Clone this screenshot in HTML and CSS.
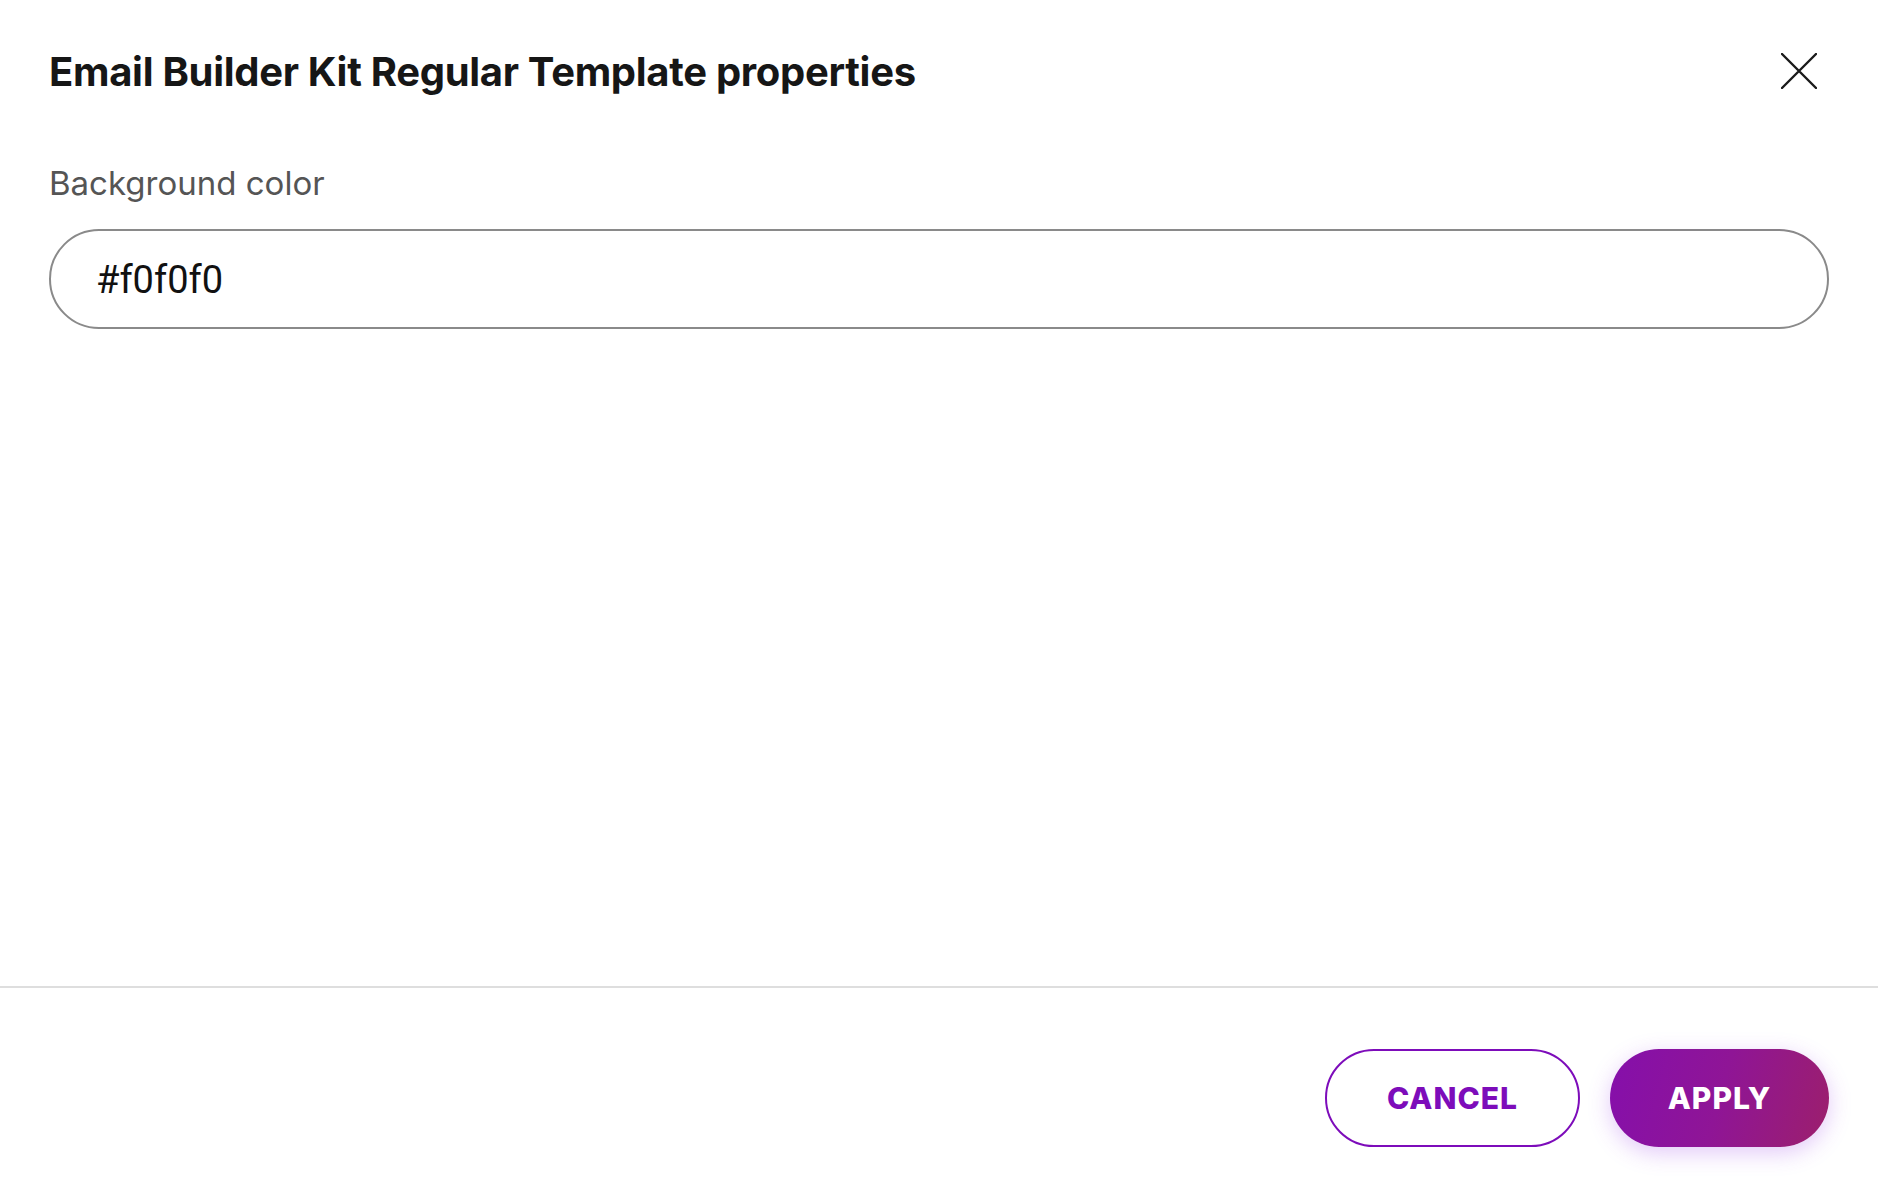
FILE: index.html
```html
<!DOCTYPE html>
<html lang="en">
<head>
<meta charset="utf-8">
<title>Template properties</title>
<link rel="stylesheet" href="styles.css">
</head>
<body>
<div class="dialog">
  <header class="dialog-header">
    <h1 class="dialog-title">Email Builder Kit Regular Template properties</h1>
    <button class="close-btn" aria-label="Close">
      <svg viewBox="0 0 36 36" width="36" height="36"><path d="M1 1 L35 35 M35 1 L1 35" stroke="#1a1a1a" stroke-width="2.4" stroke-linecap="round" fill="none"/></svg>
    </button>
  </header>
  <main class="dialog-body">
    <label class="field-label" for="bg">Background color</label>
    <input class="field-input" id="bg" type="text" value="#f0f0f0">
  </main>
  <footer class="dialog-footer">
    <button class="btn btn-outline">CANCEL</button>
    <button class="btn btn-primary">APPLY</button>
  </footer>
</div>
</body>
</html>
```
FILE: styles.css
```css
html, body {
  margin: 0;
  padding: 0;
  height: 100%;
  background: #ffffff;
}
body {
  font-family: Inter, "Noto Sans", sans-serif;
  color: #1a1a1a;
}
.dialog {
  display: flex;
  flex-direction: column;
  height: 100vh;
  box-sizing: border-box;
}
.dialog-header {
  display: flex;
  align-items: center;
  justify-content: space-between;
  padding: 48px 49px 0 49px;
  height: 46px;
}
.dialog-title {
  margin: 0;
  font-size: 40px;
  font-weight: 700;
  letter-spacing: -0.3px;
  color: #161616;
  white-space: nowrap;
}
.close-btn {
  border: 0;
  background: none;
  padding: 0;
  width: 36px;
  height: 36px;
  display: flex;
  margin-right: 12px;
  cursor: pointer;
}
.dialog-body {
  flex: 1;
  display: flex;
  flex-direction: column;
  padding: 69px 49px 0 49px;
}
.field-label {
  font-size: 33px;
  color: #555555;
  font-weight: 400;
  margin-bottom: 26px;
}
.field-input {
  box-sizing: border-box;
  height: 100px;
  width: 100%;
  border: 2px solid #8a8a8a;
  border-radius: 50px;
  padding: 2px 45px 0 45px;
  font-family: Roboto, sans-serif;
  font-size: 38px;
  color: #111111;
  outline: none;
}
.dialog-footer {
  border-top: 2px solid #dedede;
  display: flex;
  justify-content: flex-end;
  gap: 30px;
  padding: 61px 49px 50px 49px;
}
.btn {
  box-sizing: border-box;
  height: 98px;
  border-radius: 49px;
  font-family: Inter, sans-serif;
  font-size: 30px;
  font-weight: 800;
  letter-spacing: 1px;
  cursor: pointer;
}
.btn-outline {
  width: 255px;
  background: #ffffff;
  border: 2px solid #7d0cba;
  color: #7d0cba;
}
.btn-primary {
  width: 219px;
  border: 0;
  color: #ffffff;
  background: linear-gradient(105deg, #850fab 0%, #8f1596 50%, #9c1f6c 100%);
  box-shadow: 0 6px 22px rgba(150, 60, 230, 0.28);
}
```
